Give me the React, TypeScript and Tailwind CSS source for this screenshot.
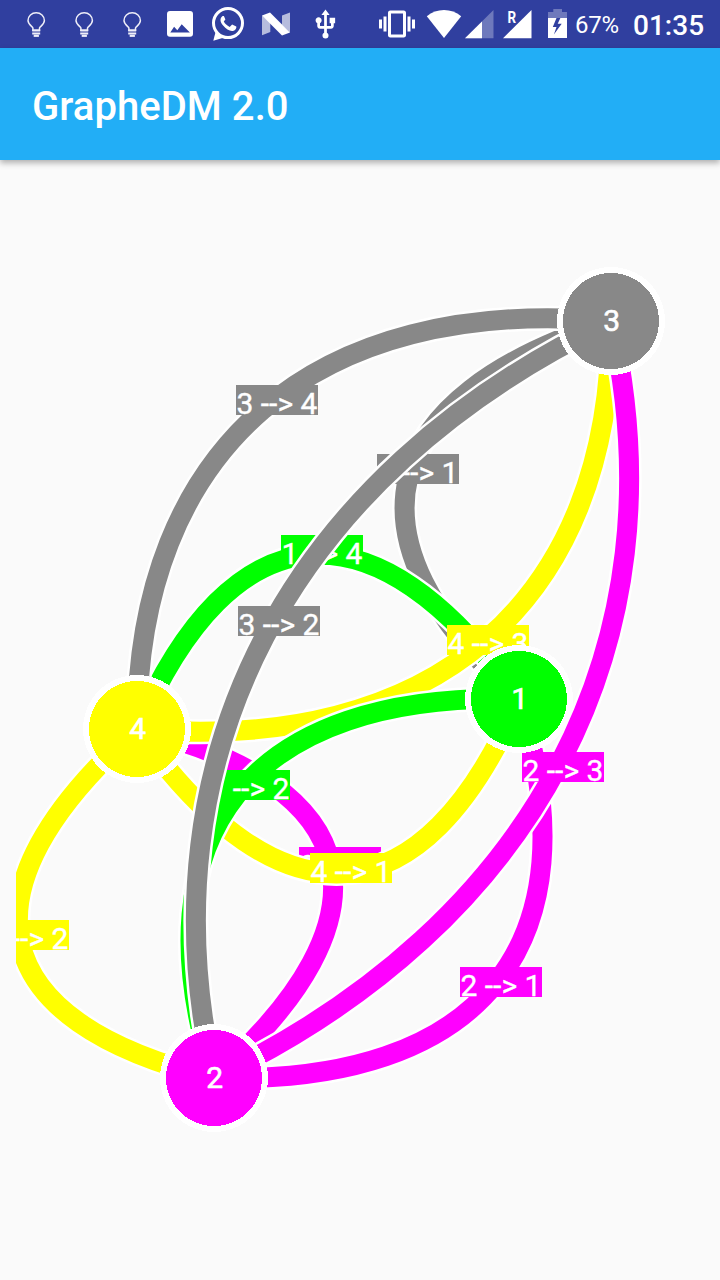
import React from "react";
import { FaWhatsapp } from "react-icons/fa";
import { MdUsb, MdVibration } from "react-icons/md";

type GraphNode = { id: number; x: number; y: number; color: string };
type Edge = { from: number; to: number; label: [number, number] };

const nodes: GraphNode[] = [
  { id: 1, x: 519, y: 699, color: "#00ff00" },
  { id: 2, x: 214, y: 1078, color: "#ff00ff" },
  { id: 3, x: 611, y: 321, color: "#888888" },
  { id: 4, x: 137, y: 729, color: "#ffff00" },
];

// Painted in this order; label is the top-left corner of its box.
const edges: Edge[] = [
  { from: 3, to: 1, label: [377, 454] },
  { from: 1, to: 4, label: [281, 535] },
  { from: 2, to: 4, label: [299, 847] },
  { from: 4, to: 3, label: [447, 625] },
  { from: 4, to: 1, label: [310, 853] },
  { from: 1, to: 2, label: [208, 770] },
  { from: 3, to: 2, label: [238, 606] },
  { from: 2, to: 1, label: [460, 967] },
  { from: 2, to: 3, label: [522, 752] },
  { from: 3, to: 4, label: [236, 385] },
  { from: 4, to: 2, label: [-13, 920] },
];

const byId = (id: number) => nodes.find((n) => n.id === id)!;

function curve(a: GraphNode, b: GraphNode) {
  const dx = b.x - a.x;
  const dy = b.y - a.y;
  const len = Math.hypot(dx, dy);
  const bulge = 640 / 3;
  const mx = (a.x + b.x) / 2 - (dy / len) * bulge;
  const my = (a.y + b.y) / 2 + (dx / len) * bulge;
  const s = 1 / 6;
  const e = 0.207;
  return `M${a.x} ${a.y}C${mx - dx * s} ${my - dy * s} ${mx + dx * e} ${my + dy * e} ${b.x} ${b.y}`;
}

function EdgeView({ edge }: { edge: Edge }) {
  const a = byId(edge.from);
  const d = curve(a, byId(edge.to));
  const [x, y] = edge.label;
  return (
    <g>
      <path d={d} fill="none" stroke="#fff" strokeWidth="25" />
      <path d={d} fill="none" stroke={a.color} strokeWidth="20" />
      <rect x={x} y={y} width="82" height="30" fill={a.color} shapeRendering="crispEdges" />
      <text x={x + 0.5} y={y + 29} fontSize="30" fill="#fff" stroke="#fff" strokeWidth="0.35" xmlSpace="preserve">
        {`${edge.from} --> ${edge.to}`}
      </text>
    </g>
  );
}

function NodeView({ node }: { node: GraphNode }) {
  return (
    <g>
      <circle cx={node.x} cy={node.y} r="54" fill="#fff" shapeRendering="crispEdges" />
      <circle cx={node.x} cy={node.y} r="48" fill={node.color} shapeRendering="crispEdges" />
      <text
        x={node.x + 0.8}
        y={node.y + 10}
        fontSize="30"
        fill="#fff"
        stroke="#fff"
        strokeWidth="0.6"
        textAnchor="middle"
      >
        {node.id}
      </text>
    </g>
  );
}

function Bulb() {
  return (
    <svg width="48" height="48" viewBox="0 0 48 48" fill="none" stroke="#eeeef8" strokeWidth="1.5">
      <path d="M20.9 30.300v-2.200c0-1.200-4.900-3.500-4.900-7.600a8.200 7.800 0 0 1 16.400 0c0 4.100-4.900 6.400-4.900 7.600v2.200z" />
      <path d="M20.200 30.600h8M20.200 33.600h8" strokeWidth="2" />
      <path d="M21.700 35.800h5.200" strokeWidth="2.200" />
    </svg>
  );
}

function StatusBar() {
  return (
    <header className="flex h-12 shrink-0 items-center bg-[#303f9f] pl-3 text-white">
      <Bulb />
      <Bulb />
      <Bulb />
      <svg width="48" height="48" viewBox="0 0 48 48" fill="#fff">
        <path
          fillRule="evenodd"
          d="M14 11h20a3 3 0 0 1 3 3v19.700a3 3 0 0 1-3 3H14a3 3 0 0 1-3-3V14a3 3 0 0 1 3-3zM14.300 32.400h19.600l-8.200-8.100-4.400 6-3.200-3.500z"
        />
      </svg>
      <svg width="48" height="48" viewBox="0 0 48 48" fill="#fff">
        <path d="M11.700 31.500L9.300 40.700l9.300-2.800" />
        <circle cx="24" cy="23.100" r="14.500" fill="#303f9f" stroke="#fff" strokeWidth="3" />
        <path d="M18.600 16.100c-3.200 2.300-2.400 6.300.5 9.400 3.300 3.700 7.200 6.300 10.500 5.200 2.300-.8 3-2.800 2.700-4.200l-4.200-2.100-2.400 2.500c-2.700-1.100-4.700-3-5.900-5.300l1.600-2.100-1.500-3.500z" />
      </svg>
      <svg width="48" height="48" viewBox="0 0 48 48" fill="#fff">
        <path d="M10 15.600v19.700l8.300-3.300V22zM38 32.400V12.600l-8 2.900V25z" opacity=".65" />
        <path d="M10 15.600l8-3 20 19.800-8 3z" />
      </svg>
      <div className="flex w-12 justify-center pl-[2px]">
        <MdUsb size={33} />
      </div>
      <div className="ml-6 flex w-[50px] justify-center">
        <MdVibration size={36} />
      </div>
      <svg width="42" height="48" viewBox="422 0 42 48" fill="#fff">
        <path d="M426.800 16.200C436.500 7.900 451.500 7.900 461.200 16.200L444 38z" />
      </svg>
      <svg width="36" height="48" viewBox="464 0 36 48" fill="#fff">
        <path d="M465 38.300L493.500 10v28.300z" opacity=".3" />
        <path d="M465 38.300L482 21.400v16.900z" />
      </svg>
      <svg width="36" height="48" viewBox="500 0 36 48" fill="#fff">
        <path d="M503 38.300L531.500 10v28.300z" />
        <text x="507.500" y="22.600" fontSize="16" fontWeight="700" textLength="8.600" lengthAdjust="spacingAndGlyphs">
          R
        </text>
      </svg>
      <svg width="32" height="48" viewBox="536 0 32 48" fill="#fff">
        <path d="M548 12h5.300V9h8.700v3h5v6h-19z" opacity=".3" />
        <path fillRule="evenodd" d="M548 18h19v20h-19zM556.500 18l-3.700 9h3.700l-2.600 7.400 7.800-10.700h-4l2.700-5.700z" />
      </svg>
      <span className="ml-[7px] mt-[2px] w-[50px] text-[24px] leading-none tracking-[-0.3px]">67%</span>
      <span className="ml-[8px] mt-[3px] text-[28px] font-medium leading-none">01:35</span>
    </header>
  );
}

export default function App() {
  return (
    <div className="flex h-[1280px] w-[720px] flex-col overflow-hidden bg-[#fafafa] font-['Roboto',sans-serif]">
      <StatusBar />
      <div className="flex h-28 shrink-0 items-center bg-[#22aef6] pl-8 pt-[6px] shadow-[0_3px_6px_rgba(0,0,0,0.3)]">
        <h1 className="text-[40px] font-medium leading-none tracking-[0.05px] text-white">GrapheDM 2.0</h1>
      </div>
      <main className="min-h-0 flex-1 p-4">
        <svg className="block" width="688" height="1088" viewBox="16 176 688 1088">
          {edges.map((e) => (
            <EdgeView key={`${e.from}-${e.to}`} edge={e} />
          ))}
          {nodes.map((n) => (
            <NodeView key={n.id} node={n} />
          ))}
        </svg>
      </main>
    </div>
  );
}
